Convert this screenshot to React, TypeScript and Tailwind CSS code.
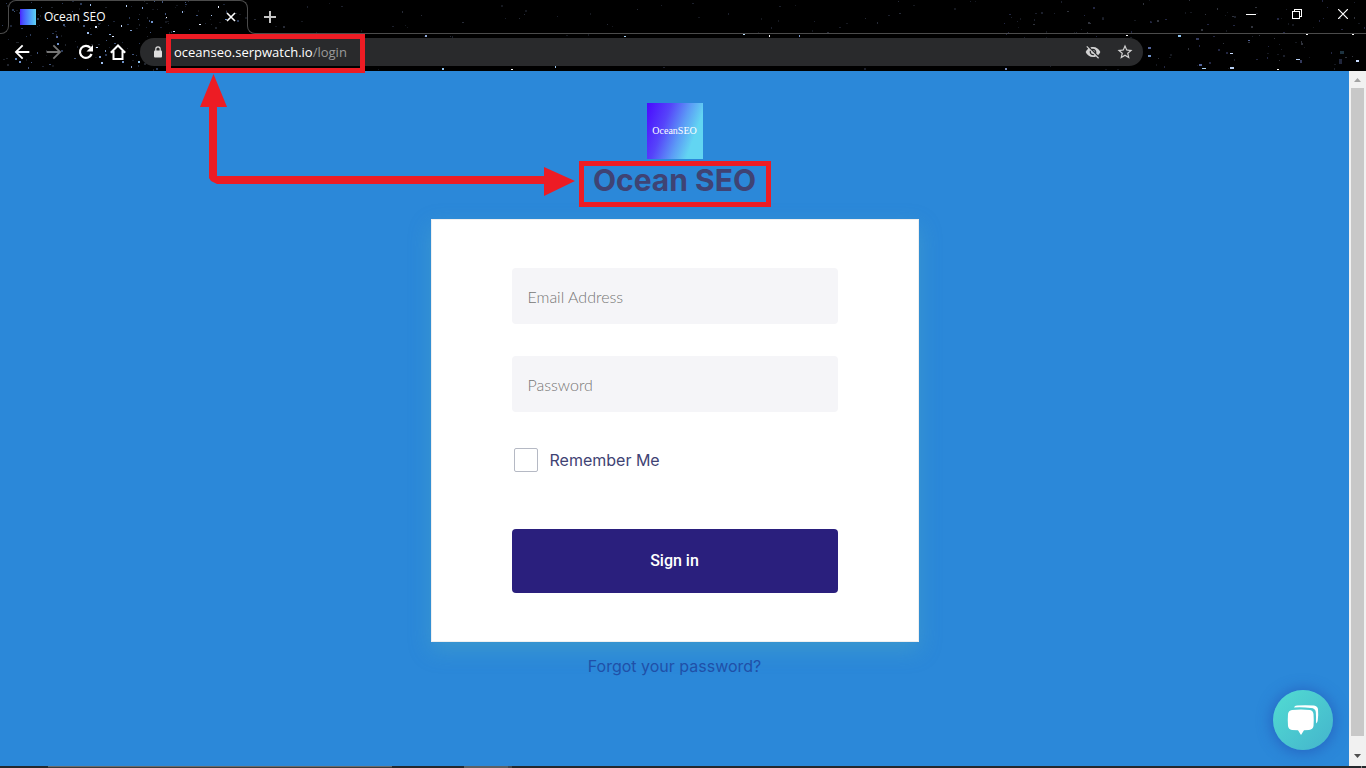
import { MdArrowBack, MdArrowForward, MdStarBorder, MdVisibilityOff } from 'react-icons/md';

type Star = { x: number; y: number; w: number; h: number; color: string };

// Brighter stars, placed by hand
const BRIGHT_STARS: Star[] = [
  { x: 90, y: 4, w: 1, h: 2, color: '#9fc0ee' },
  { x: 95, y: 26, w: 2, h: 2, color: '#dbe8ff' },
  { x: 109, y: 34, w: 2, h: 1, color: '#8fb0e0' },
  { x: 121, y: 25, w: 1, h: 2, color: '#c9dcff' },
  { x: 126, y: 5, w: 1, h: 2, color: '#b8d0f5' },
  { x: 130, y: 30, w: 2, h: 1, color: '#7d9ccf' },
  { x: 142, y: 7, w: 1, h: 2, color: '#7d9ccf' },
  { x: 151, y: 21, w: 2, h: 2, color: '#6f93cc' },
  { x: 166, y: 17, w: 1, h: 1, color: '#ffffff' },
  { x: 173, y: 31, w: 2, h: 1, color: '#c9dcff' },
  { x: 182, y: 11, w: 1, h: 2, color: '#93b2e2' },
  { x: 199, y: 24, w: 2, h: 1, color: '#e8f0ff' },
  { x: 211, y: 15, w: 1, h: 1, color: '#a9c4ee' },
  { x: 218, y: 6, w: 1, h: 2, color: '#e8f0ff' },
  { x: 225, y: 19, w: 2, h: 1, color: '#6f93cc' },
  { x: 56, y: 36, w: 2, h: 2, color: '#52649c' },
  { x: 57, y: 43, w: 2, h: 2, color: '#6f93cc' },
  { x: 87, y: 32, w: 2, h: 2, color: '#9fc0ee' },
  { x: 96, y: 47, w: 2, h: 1, color: '#c9dcff' },
  { x: 99, y: 56, w: 2, h: 2, color: '#7d9ccf' },
  { x: 101, y: 62, w: 2, h: 2, color: '#9fc0ee' },
  { x: 105, y: 50, w: 1, h: 2, color: '#7d9ccf' },
  { x: 112, y: 36, w: 2, h: 1, color: '#dbe8ff' },
  { x: 122, y: 61, w: 2, h: 2, color: '#6f93cc' },
  { x: 138, y: 61, w: 2, h: 2, color: '#8ec4f0' },
  { x: 131, y: 66, w: 1, h: 2, color: '#7d9ccf' },
  { x: 15, y: 58, w: 2, h: 2, color: '#5d82ba' },
  { x: 19, y: 61, w: 2, h: 2, color: '#6f93cc' },
  { x: 425, y: 35, w: 2, h: 2, color: '#8fa8d8' },
  { x: 442, y: 68, w: 2, h: 2, color: '#8ec4f0' },
  { x: 511, y: 69, w: 2, h: 1, color: '#ffffff' },
  { x: 555, y: 66, w: 1, h: 2, color: '#9fc8ee' },
  { x: 624, y: 36, w: 2, h: 1, color: '#a9d4f5' },
  { x: 743, y: 34, w: 2, h: 1, color: '#b9dcf8' },
  { x: 769, y: 35, w: 1, h: 2, color: '#ffffff' },
  { x: 799, y: 35, w: 1, h: 2, color: '#7d9ccf' },
  { x: 1005, y: 68, w: 2, h: 2, color: '#7488b8' },
  { x: 1126, y: 35, w: 2, h: 1, color: '#ffffff' },
  { x: 1148, y: 47, w: 3, h: 2, color: '#52649c' },
  { x: 1148, y: 55, w: 3, h: 2, color: '#6f93cc' },
  { x: 1178, y: 35, w: 3, h: 2, color: '#8ec4f0' },
  { x: 1196, y: 38, w: 3, h: 2, color: '#33395c' },
  { x: 1199, y: 64, w: 3, h: 2, color: '#52649c' },
  { x: 1202, y: 68, w: 4, h: 1, color: '#a9d4f5' },
  { x: 1230, y: 53, w: 3, h: 1, color: '#c9dcff' },
  { x: 1230, y: 67, w: 4, h: 2, color: '#b8d0f5' },
  { x: 1248, y: 40, w: 2, h: 1, color: '#52649c' },
  { x: 1277, y: 69, w: 2, h: 1, color: '#ffffff' },
  { x: 1296, y: 59, w: 4, h: 1, color: '#b8d0f5' },
  { x: 1300, y: 60, w: 2, h: 3, color: '#33395c' },
  { x: 1306, y: 34, w: 2, h: 1, color: '#ffffff' },
  { x: 1340, y: 51, w: 4, h: 3, color: '#1d3340' },
  { x: 1339, y: 59, w: 3, h: 5, color: '#20263c' },
  { x: 1352, y: 34, w: 2, h: 1, color: '#ffffff' },
  { x: 1356, y: 60, w: 3, h: 2, color: '#c9dcff' },
];

function scatter(count: number, x0: number, x1: number, colors: string[], seed: number): Star[] {
  let s = seed;
  const next = () => {
    s = (s * 1103515245 + 12345) % 2147483648;
    return s / 2147483648;
  };
  return Array.from({ length: count }, () => ({
    x: Math.floor(x0 + next() * (x1 - x0)),
    y: Math.floor(next() * 70),
    w: next() > 0.6 ? 2 : 1,
    h: next() > 0.7 ? 2 : 1,
    color: colors[Math.floor(next() * colors.length)],
  }));
}

const STARS: Star[] = [
  ...scatter(190, 0, 250, ['#1c2436', '#2b3a58', '#20242c', '#41557d', '#15181f'], 7),
  ...scatter(90, 250, 1000, ['#1b1f2b', '#15181f', '#262a36'], 21),
  ...scatter(130, 1000, 1366, ['#1b1f2b', '#15181f', '#30333c', '#222642'], 42),
  ...BRIGHT_STARS,
];

const StarField = () => (
  <svg className="absolute left-0 top-0" width="1366" height="71" shapeRendering="crispEdges" aria-hidden="true">
    {STARS.map((s, i) => (
      <rect key={i} x={s.x} y={s.y} width={s.w} height={s.h} fill={s.color} />
    ))}
  </svg>
);

const TabStrip = () => (
  <div className="relative flex h-[34px] items-end">
    <span className="h-2 w-[9px] rounded-br-lg border-b border-r border-[#4b4b4b]" />
    <div className="-ml-px flex h-[26px] w-60 items-center self-start rounded-t-lg border-x border-t border-[#4b4b4b] pl-[11px] pr-2 pt-[7px]">
      <span className="h-4 w-4 bg-linear-to-r from-[#4a1cff] to-[#5fd0f2]" />
      <span className="ml-2 flex-1 font-['Open_Sans','Noto_Sans',sans-serif] text-xs leading-4 text-white">Ocean SEO</span>
      <button type="button" aria-label="Close tab" className="flex h-4 w-4 items-center justify-center">
        <svg width="10" height="10" viewBox="0 0 10 10" stroke="#fff" strokeWidth="1.6">
          <path d="M1 1l8 8M9 1l-8 8" />
        </svg>
      </button>
    </div>
    <span className="-ml-px h-2 w-[9px] rounded-bl-lg border-b border-l border-[#4b4b4b]" />
    <div className="flex h-full flex-1 items-center justify-between border-b border-[#4b4b4b]">
      <button type="button" aria-label="New tab" className="flex h-7 w-7 items-center justify-center">
        <svg width="12" height="12" viewBox="0 0 12 12" stroke="#c4c4c4" strokeWidth="2">
          <path d="M6 0v12M0 6h12" />
        </svg>
      </button>
      <div className="flex h-7 self-start text-white">
        <button type="button" aria-label="Minimize" className="flex w-[46px] items-center justify-center">
          <svg width="10" height="10" stroke="currentColor" shapeRendering="crispEdges">
            <path d="M0 5.5h10" />
          </svg>
        </button>
        <button type="button" aria-label="Restore" className="flex w-[46px] items-center justify-center">
          <svg width="10" height="10" fill="none" stroke="currentColor" shapeRendering="crispEdges">
            <path d="M.5 2.5h7v7h-7zM2.5 2.5v-2h7v7h-2" />
          </svg>
        </button>
        <button type="button" aria-label="Close" className="flex w-[46px] items-center justify-center">
          <svg width="10" height="10" stroke="currentColor" strokeWidth="1.2">
            <path d="M0 0l10 10M10 0L0 10" />
          </svg>
        </button>
      </div>
    </div>
  </div>
);

const Toolbar = () => (
  <div className="relative flex h-[37px] items-center pb-0.5 pl-1.5 text-white">
    <button type="button" aria-label="Back" className="flex w-8 justify-center">
      <MdArrowBack size={22} />
    </button>
    <button type="button" aria-label="Forward" className="flex w-8 justify-center text-[#767676]">
      <MdArrowForward size={22} />
    </button>
    <button type="button" aria-label="Reload" className="flex w-8 justify-center">
      <svg width="16" height="16" viewBox="0 0 16 16" fill="none" stroke="currentColor" strokeWidth="2.2">
        <path d="M13.6 10A6 6 0 1 1 12.4 3.8" />
        <path d="M15 1v6.500H8.500z" fill="currentColor" stroke="none" />
      </svg>
    </button>
    <button type="button" aria-label="Home" className="flex w-8 justify-center">
      <svg width="16" height="16" viewBox="0 0 16 16" fill="none" stroke="currentColor" strokeWidth="2">
        <path d="M.8 8.8L8 1.500l7.200 7.300M3.500 7v8h9V7" />
      </svg>
    </button>
    <div className="relative ml-1.5 mr-[223px] flex h-7 flex-1 items-center rounded-full bg-[#292a2c] pl-3.5 pr-2.5 text-[#d2d2d2]">
      <svg width="8" height="12" viewBox="0 0 8 12" aria-hidden="true">
        <rect y="4.500" width="8" height="7" rx="1" fill="#dedede" />
        <path d="M1.800 5V3a2.200 2.200 0 0 1 4.400 0v2" fill="none" stroke="#dedede" strokeWidth="1.200" />
      </svg>
      <a href="#login" className="ml-3 flex-1 font-['Open_Sans','Noto_Sans',sans-serif] text-[13px] leading-5 text-white">
        oceanseo.serpwatch.io<span className="text-[#9a9a9a]">/login</span>
      </a>
      <button type="button" aria-label="Third-party cookies blocked" className="flex w-8 justify-center">
        <MdVisibilityOff size={16} />
      </button>
      <button type="button" aria-label="Bookmark this page" className="-mr-2 flex w-8 justify-center">
        <MdStarBorder size={18} />
      </button>
      {/* Highlight around the address */}
      <span className="absolute -top-1 left-[26px] z-10 h-[39px] w-[199px] border-5 border-[#ed1c24]" />
    </div>
  </div>
);

// Double ended arrow from the address down to the heading
const Connector = () => (
  <svg className="absolute left-[200px] top-[3px]" width="376" height="124" fill="#ed1c24" aria-hidden="true">
    <path d="M13.5 0L27 33H17V102H344V93L375 107L344 122V110H17L11 107L9 104V33H0z" />
  </svg>
);

const Logo = () => (
  <div className="flex h-14 w-14 items-center justify-center bg-[linear-gradient(110deg,#4a08ff_0%,#5644fa_32%,#5c9cf6_58%,#62d5f2_78%)]">
    <span className="font-['Liberation_Serif',serif] text-[10px] leading-3 text-white">OceanSEO</span>
  </div>
);

const fieldClass =
  'block h-14 w-full rounded bg-[#f5f5f8] px-4 font-[Lato,sans-serif] text-base font-light outline-none placeholder:text-[#757575]';

const LoginForm = () => (
  <form
    onSubmit={(e) => e.preventDefault()}
    className="w-[488px] max-w-full border border-[#efefef] bg-white px-20 py-12 shadow-[0_8px_20px_0_rgba(90,180,190,0.35)]"
  >
    <div className="space-y-8">
      <input type="email" aria-label="Email Address" placeholder="Email Address" className={fieldClass} />
      <input type="password" aria-label="Password" placeholder="Password" className={fieldClass} />
    </div>
    <div className="mt-9 flex items-center pl-0.5">
      <input
        id="remember"
        type="checkbox"
        className="h-6 w-6 appearance-none rounded-xs border border-[#b5b9c4] bg-white checked:bg-[#2a1f7d]"
      />
      <label htmlFor="remember" className="ml-3 text-base leading-6 text-[#3f4374]">
        Remember Me
      </label>
    </div>
    <button
      type="submit"
      className="mt-[57px] block h-16 w-full rounded bg-[#2a1f7d] font-[Roboto,sans-serif] text-base font-medium text-white"
    >
      Sign in
    </button>
  </form>
);

const ChatButton = () => (
  <button
    type="button"
    aria-label="Open chat"
    className="absolute bottom-4 right-4 flex h-15 w-15 items-center justify-center rounded-full bg-linear-to-br from-[#52dcd2] to-[#44b4cc] shadow-[0_1px_14px_2px_rgba(35,80,180,0.6)]"
  >
    <svg width="32" height="32" viewBox="0 0 32 32" fill="#fff">
      <path d="M5 6Q14 5 23 6Q26 6.500 26.500 10Q27 16 26.500 22Q26 25.500 22 26L17 26.300L14 31L11 26.300L5 26Q1.500 25.500 1 22Q.5 16 1 10Q1.500 6.500 5 6z" />
      <path d="M7 3.500Q7.500 1.700 10 1.500Q18 .8 27 1.500Q30.500 2 31 5Q31.500 11 30.800 16Q30.500 19 29 19.500Q29.200 13 28.800 8Q28.300 4.300 24 4Q15 3 7 3.500z" />
    </svg>
  </button>
);

const ScrollBar = () => (
  <div className="flex w-[17px] flex-col bg-[#f1f1f1]" aria-hidden="true">
    <svg width="17" height="17" fill="#a3a3a3">
      <path d="M5 11l3.5-4 3.500 4z" />
    </svg>
    <span className="mx-0.5 flex-1 bg-[#c8c8c8]" />
    <svg className="mb-px mt-3" width="17" height="17" fill="#4f4f4f">
      <path d="M5 6h7l-3.500 4z" />
    </svg>
  </div>
);

const TaskBar = () => (
  <div className="flex h-0.5 bg-[#25282c]">
    <span className="ml-12 w-[344px] border-t border-[#6a6a6a] bg-[#3a3d40]" />
    <span className="ml-[72px] w-11 bg-[#5c6064]" />
    <span className="w-1 bg-[#45494d]" />
    <span className="ml-auto mr-1 w-px bg-[#8a8a8a]" />
  </div>
);

export default function App() {
  return (
    <div className="flex min-h-screen flex-col bg-[#2b88d9] font-[Inter,sans-serif]">
      <header className="relative z-10 bg-black">
        <div className="absolute inset-0 overflow-hidden">
          <StarField />
        </div>
        <TabStrip />
        <Toolbar />
      </header>

      <div className="flex flex-1">
        <main className="relative flex flex-1 flex-col items-center pt-8">
          <Logo />
          <h1 className="mb-3 mt-0.5 h-[46px] w-48 border-5 border-[#ed1c24] text-center text-[30px] font-bold leading-7 text-[#3f4374]">
            Ocean SEO
          </h1>
          <LoginForm />
          <a href="#forgot" className="mt-3 text-base leading-6 text-[#2050a8]">
            Forgot your password?
          </a>
          <Connector />
          <ChatButton />
        </main>
        <ScrollBar />
      </div>
      <TaskBar />
    </div>
  );
}
